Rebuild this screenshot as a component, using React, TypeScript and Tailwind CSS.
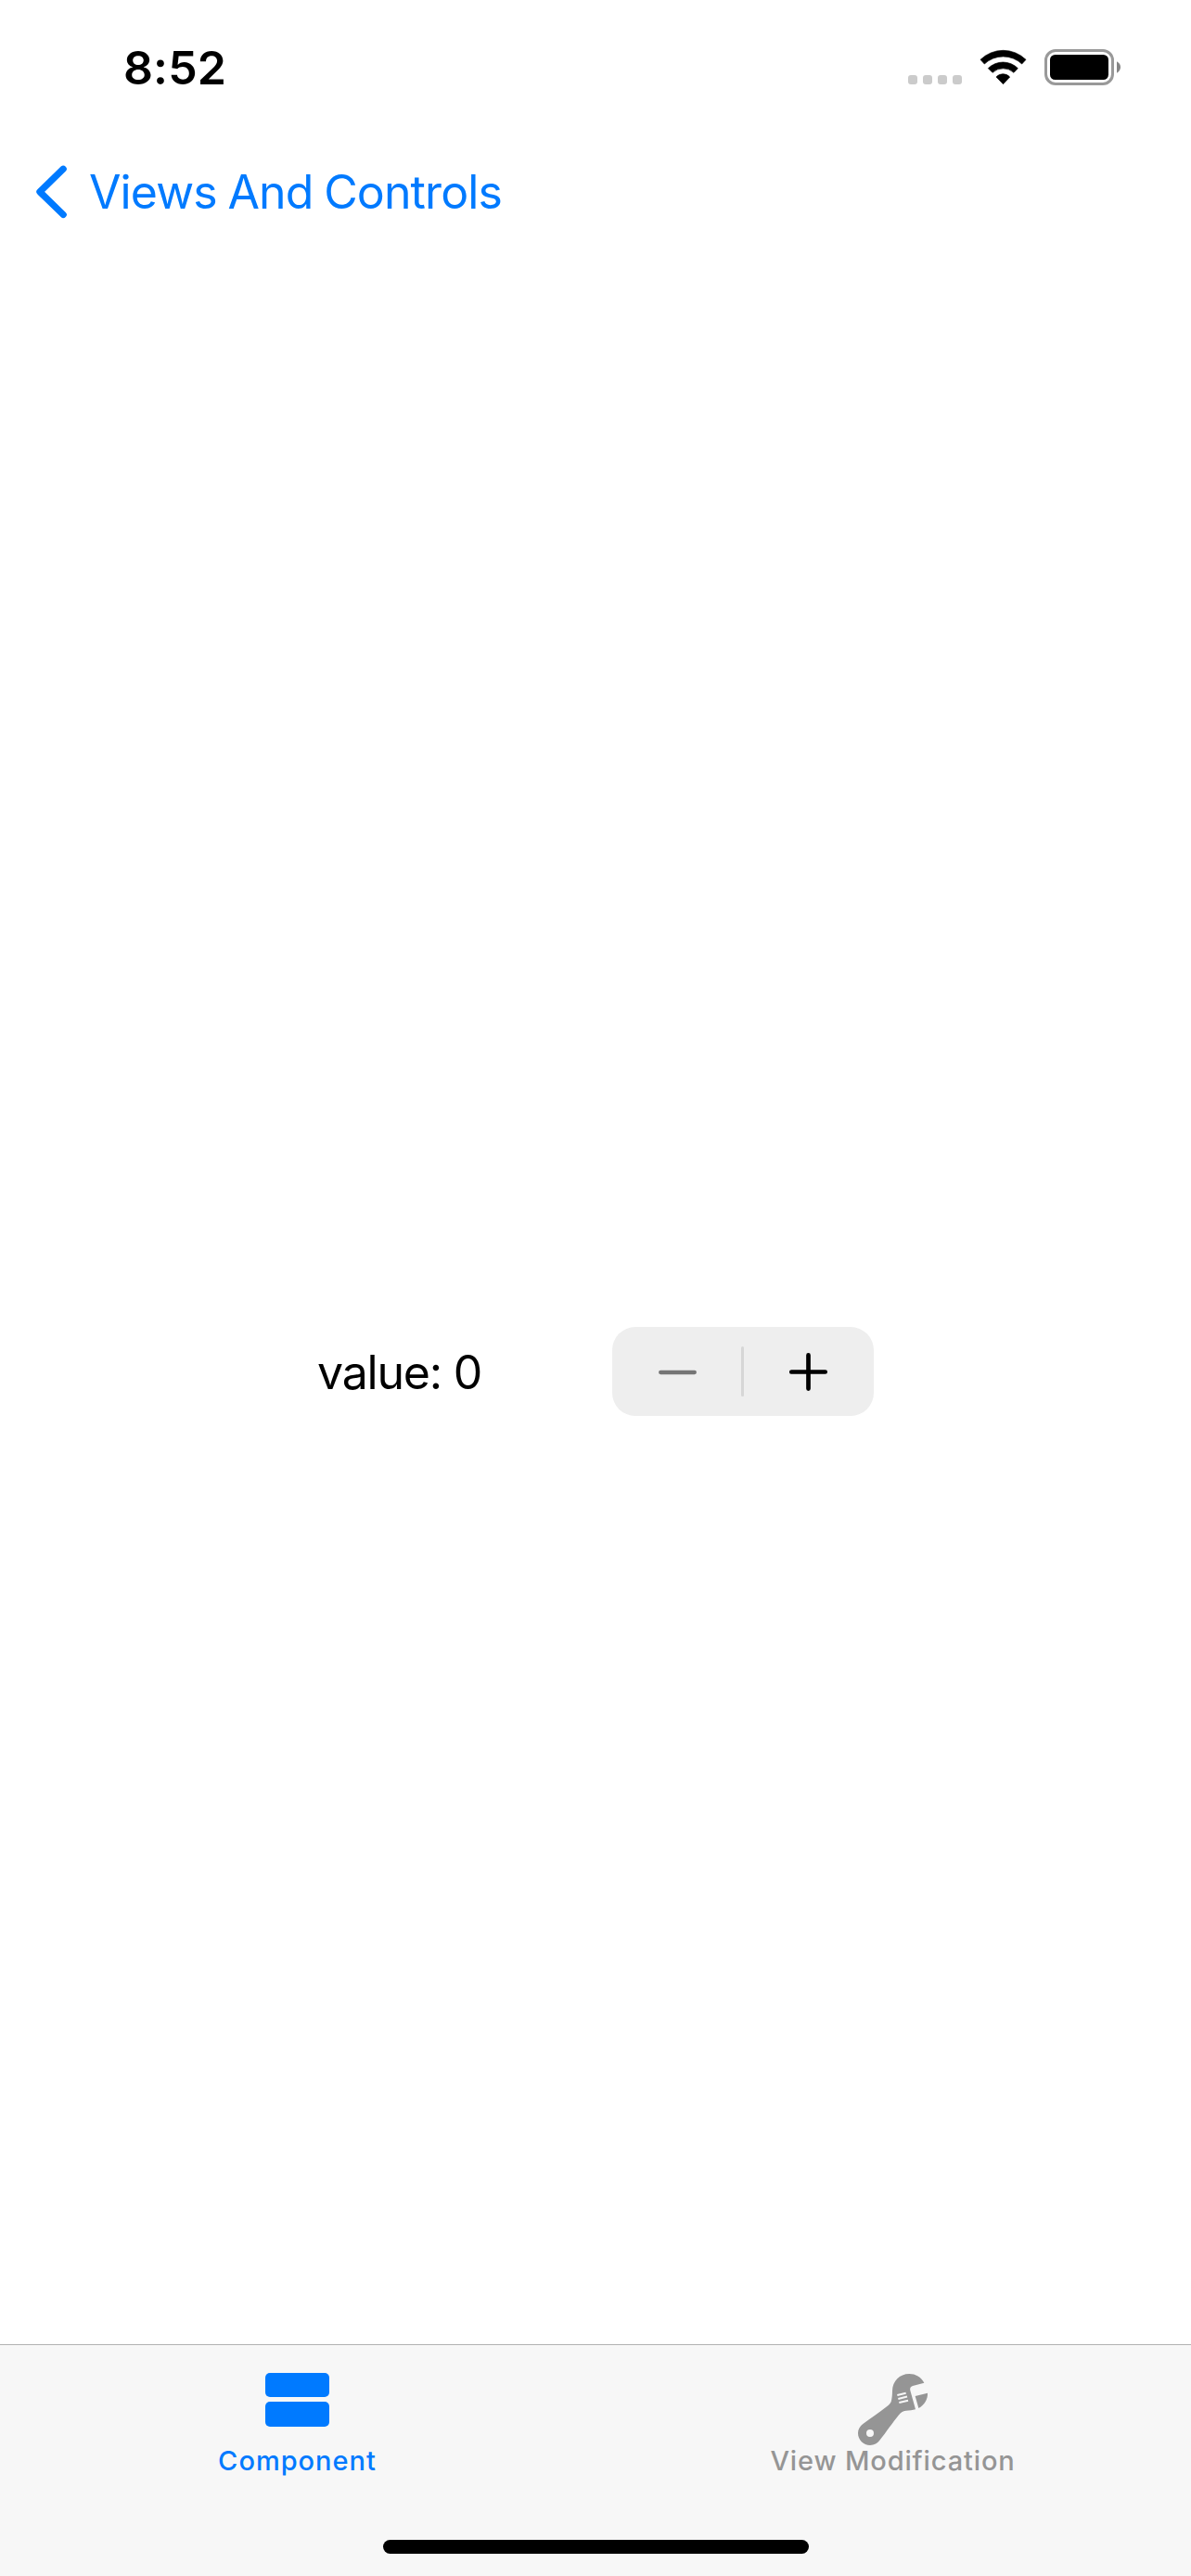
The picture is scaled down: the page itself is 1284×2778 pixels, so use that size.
import React from "react";

function StatusBar() {
  return (
    <header className="flex h-[141px] items-start justify-between pl-[133px] pr-[76px] text-black">
      <time className="mt-[48px] text-[50px] font-semibold leading-none tracking-[0.1px]">8:52</time>
      <div className="mt-[53px] flex items-start">
        <div className="mr-[19px] mt-[28px] flex gap-[6px]">
          <span className="size-[10px] rounded-[3px] bg-[#cbcbcb]" />
          <span className="size-[10px] rounded-[3px] bg-[#cbcbcb]" />
          <span className="size-[10px] rounded-[3px] bg-[#cbcbcb]" />
          <span className="size-[10px] rounded-[3px] bg-[#cbcbcb]" />
        </div>
        <svg className="mr-[18px] h-[39px] w-[52px]" viewBox="288 69 156 117" strokeWidth="2" strokeLinejoin="round" stroke="black">
          <path d="M291 103A105 105 0 0 1 438 103L425 117A88 88 0 0 0 304 117Z" />
          <path d="M316 131A68 68 0 0 1 412 131L399 145A51 51 0 0 0 330 145Z" />
          <path d="M342 159A29.500 29.500 0 0 1 386 159L364.500 182Z" />
        </svg>
        <svg className="h-[39px] w-[82px]" viewBox="0 0 82 39" fill="none">
          <rect x="1.500" y="1.500" width="72" height="36" rx="10.500" stroke="#999" strokeWidth="3" />
          <rect x="6" y="6" width="63" height="27" rx="5.500" fill="black" />
          <path d="M78 13.300C80.500 14.500 82 17 82 19.500S80.500 24.500 78 25.700Z" fill="#858585" />
        </svg>
      </div>
    </header>
  );
}

function NavigationBar() {
  return (
    <nav className="h-[288px]">
      <button className="flex items-start pl-[36px] text-[#007aff]">
        <svg className="mt-[36px] h-[60px] w-[38px]" viewBox="36 177 38 60" fill="none" stroke="currentColor" strokeWidth="7.200" strokeLinecap="round" strokeLinejoin="round">
          <path d="M68.200 182.200L42.900 206.800L68.200 231.500" />
        </svg>
        <span className="ml-[22px] mt-[41px] whitespace-nowrap text-[50px] leading-none tracking-[-0.88px] [word-spacing:-1.5px]">Views And Controls</span>
      </button>
    </nav>
  );
}

function Stepper() {
  return (
    <div className="flex h-[96px] w-[282px] items-center rounded-[25px] bg-[#eeeeee] pl-[50px]">
      <button aria-label="Decrement">
        <svg className="h-[42px] w-[42px]" viewBox="0 0 42 42" stroke="#757575" strokeWidth="4.300" strokeLinecap="round">
          <path d="M2.200 22H38.800" />
        </svg>
      </button>
      <span className="ml-[47px] h-[54px] w-[3px] rounded-full bg-[#d6d6d6]" />
      <button className="ml-[49px]" aria-label="Increment">
        <svg className="h-[42px] w-[42px]" viewBox="0 0 42 42" stroke="black" strokeWidth="4.700" strokeLinecap="round">
          <path d="M2.300 21.500H38.700M20.500 3.400V39.600" />
        </svg>
      </button>
    </div>
  );
}

function WrenchIcon() {
  return (
    <svg className="mt-[30px] h-[79px] w-[77px]" viewBox="372 147 231 237" fill="currentColor">
      <path
        fillRule="evenodd"
        d="M589 179C579 160 561 150 541 150C509 150 487 174 486 205C486 218 485 228 483 237C481 244 477 249 470 254C445 274 414 294 391 312C381 320 375 330 375 342C375 364 393 381 414 381C427 381 438 375 446 364C466 338 488 306 506 284C513 275 520 270 530 269C542 269 552 267 561 265L544 204C542 196 545 191 552 189ZM414 330A12 12 0 1 0 414 354A12 12 0 1 0 414 330Z"
      />
      <path d="M560 222L600 212C601 233 589 251 571 261Z" />
      <path d="M502 219L530 212M505 231L534 223.500M508 243L537 236" stroke="#f7f7f7" strokeWidth="6" />
    </svg>
  );
}

function TabBar() {
  return (
    <footer className="flex h-[250px] flex-col items-center border-t border-[#b2b2b2] bg-[#f7f7f7] text-[29px] font-medium leading-none">
      <div className="flex h-[210px] w-full">
        <button className="flex w-1/2 flex-col items-center pr-[1px] text-[#007aff]">
          <div className="mt-[29.500px] flex h-[78.500px] flex-col gap-[5px]">
            <span className="h-[26.500px] w-[69px] rounded-[5px] bg-current" />
            <span className="h-[27px] w-[69px] rounded-[5px] bg-current" />
          </div>
          <span className="mt-[2px] whitespace-nowrap tracking-[1px]">Component</span>
        </button>
        <button className="flex w-1/2 flex-col items-center pr-[1px] text-[#959595]">
          <WrenchIcon />
          <span className="mt-[1px] whitespace-nowrap tracking-[0.87px]">View Modification</span>
        </button>
      </div>
      <div className="h-[15px] w-[459px] rounded-full bg-black" />
    </footer>
  );
}

export default function App() {
  return (
    <div className="flex h-[2778px] w-[1284px] flex-col bg-white font-['Inter',sans-serif] antialiased">
      <StatusBar />
      <NavigationBar />
      <main className="flex flex-1 items-center justify-center">
        <div className="flex w-[600px] items-center justify-between">
          <span className="whitespace-nowrap pt-[2px] text-[50px] leading-none tracking-[-1.2px] text-black">value: 0</span>
          <Stepper />
        </div>
      </main>
      <TabBar />
    </div>
  );
}
